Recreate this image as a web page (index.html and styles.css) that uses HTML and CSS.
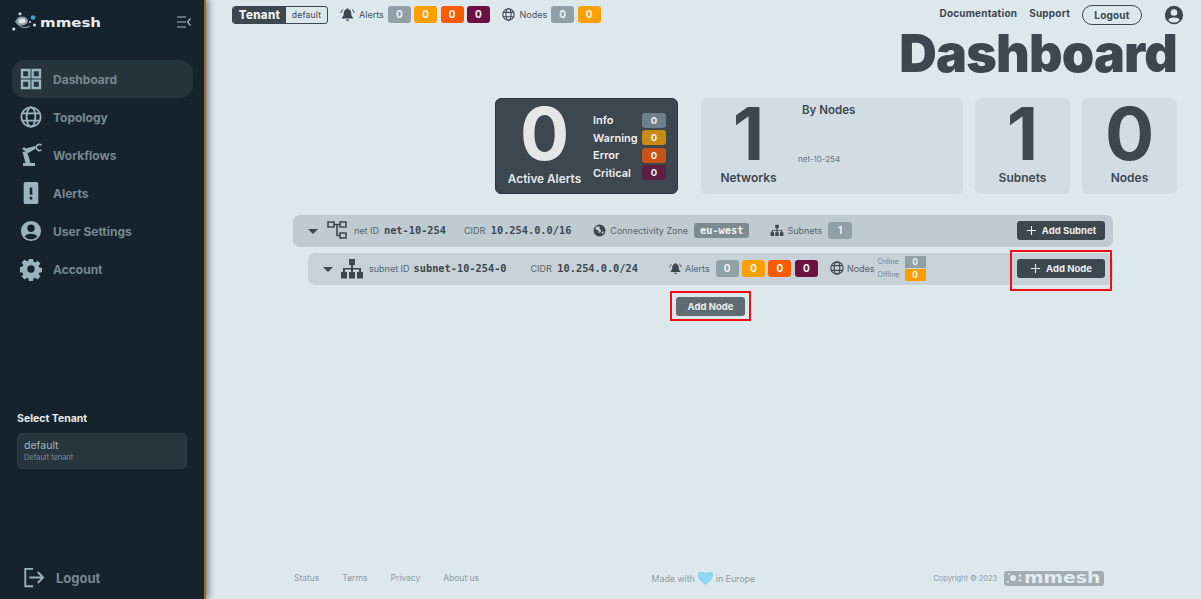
FILE: index.html
```html
<!DOCTYPE html>
<html>

<head>
    <title>Dashboard</title>
    <meta charset="utf-8" />
    <link rel="stylesheet" href="styles.css">
</head>

<body>
    <svg class="defs" width="0" height="0">
        <defs>
            <symbol id="globe" viewBox="0 0 24 24">
                <g fill="none" stroke="currentColor" stroke-width="2">
                    <circle cx="12" cy="12" r="10.500" />
                    <ellipse cx="12" cy="12" rx="4.800" ry="10.500" />
                    <path d="M2.500 8h19M2.500 16h19" />
                </g>
            </symbol>
            <symbol id="bell" viewBox="0 0 24 24">
                <path fill="currentColor" d="M12 2a1.600 1.600 0 0 1 1.600 1.600c3 .8 4.400 3.200 4.400 6.400 0 3.500 1 5.500 3 7v1.500H3V17c2-1.500 3-3.500 3-7 0-3.200 1.400-5.600 4.400-6.400A1.600 1.600 0 0 1 12 2zM9.600 20h4.800a2.400 2.400 0 0 1-4.800 0z" />
                <path fill="none" stroke="currentColor" stroke-width="1.600" d="M1.500 9.500C1.800 7 3 5 5 3.500M22.500 9.500C22.200 7 21 5 19 3.500" />
            </symbol>
            <symbol id="sitemap" viewBox="0 0 24 20">
                <path fill="currentColor" d="M9 0h6v6h-2v3h8v4h-2v-2.500h-6V13h-2v-2.500H5V13H3V9h8V6H9zM1 13h6v6.500H1zM9 13h6v6.500H9zM17 13h6v6.500h-6z" />
            </symbol>
            <symbol id="plus" viewBox="0 0 12 12">
                <path fill="none" stroke="currentColor" stroke-width="1.200" d="M6 1v10M1 6h10" />
            </symbol>
            <symbol id="user" viewBox="0 0 24 24">
                <path fill="currentColor" fill-rule="evenodd" d="M12 1a11 11 0 1 0 0 22 11 11 0 0 0 0-22zm0 4a4 4 0 1 1 0 8 4 4 0 0 1 0-8zm0 16c-2.800 0-5.300-1.200-6.900-3.100C6.200 16 9 15 12 15s5.800 1 6.900 2.900C17.300 19.800 14.800 21 12 21z" />
            </symbol>
        </defs>
    </svg>

    <aside class="sidebar">
        <div class="brand">
            <svg class="brand-mark" viewBox="0 0 28 20">
                <ellipse cx="10" cy="9" rx="6" ry="4.500" fill="#8d9aa1" />
                <ellipse cx="10" cy="9" rx="3.500" ry="2.500" fill="#dfe6e9" />
                <circle cx="21" cy="5.500" r="2.300" fill="#35a7d0" />
                <circle cx="8" cy="1.800" r="1.600" fill="#c4cfd4" />
                <circle cx="1.800" cy="17" r="1.500" fill="#e4eaed" />
                <circle cx="22.500" cy="13" r="1.500" fill="#dfe6e9" />
                <circle cx="18" cy="10" r="1" fill="#dfe6e9" />
                <path d="M3 9q7 10 15 5" fill="none" stroke="#9fb0b8" stroke-width="1" />
            </svg>
            <span class="brand-name">mmesh</span>
            <svg class="collapse" viewBox="0 0 14 12">
                <path fill="none" stroke="#a9bdc4" stroke-width="1.200" d="M0 1h9M0 6h9M0 11h9M13.500 2.500 10.500 6l3 3.500" />
            </svg>
        </div>

        <nav class="menu">
            <a class="menu-item active">
                <svg class="menu-icon" viewBox="0 0 24 24">
                    <path fill="none" stroke="currentColor" stroke-width="2.600" d="M2.200 2.200h8v8h-8zM13.800 2.200h8v8h-8zM2.200 13.800h8v8h-8zM13.800 13.800h8v8h-8z" />
                </svg>
                Dashboard
            </a>
            <a class="menu-item">
                <svg class="menu-icon"><use href="#globe" /></svg>
                Topology
            </a>
            <a class="menu-item">
                <svg class="menu-icon" viewBox="0 0 22 24">
                    <path fill="currentColor" d="M3 20h12v3H3zM2.500 9 7 8l3.500 12h-5zM2 6l2-2 2 1.500L15 3l.8 2.500L8.500 10z" />
                    <path fill="none" stroke="currentColor" stroke-width="1.700" d="M21.500 2Q17.500 0 16 4.500q2 4.500 5.500 2.500" />
                </svg>
                Workflows
            </a>
            <a class="menu-item">
                <svg class="menu-icon" viewBox="0 0 24 24">
                    <path fill="currentColor" fill-rule="evenodd" d="M6 0h12a2 2 0 0 1 2 2v20a2 2 0 0 1-2 2H6a2 2 0 0 1-2-2V2a2 2 0 0 1 2-2zm4.600 6v8h2.800V6zm0 10v3h2.800v-3z" />
                </svg>
                Alerts
            </a>
            <a class="menu-item">
                <svg class="menu-icon"><use href="#user" /></svg>
                User Settings
            </a>
            <a class="menu-item">
                <svg class="menu-icon" viewBox="0 0 24 24">
                    <path fill="currentColor" fill-rule="evenodd" d="M9.800 1h4.400l.6 3.100 1.700.7 2.600-1.800 3.100 3.100-1.800 2.600.7 1.700 3 .6v4.400l-3 .6-.7 1.700 1.800 2.600-3.100 3.100-2.600-1.800-1.700.7-.6 3H9.800l-.6-3-1.700-.7-2.600 1.800-3.100-3.100 1.800-2.600-.7-1.700-3-.6V9.800l3-.6.7-1.700L1.800 4.900l3.100-3.100 2.600 1.800 1.700-.7zM12 8a4 4 0 1 0 0 8 4 4 0 0 0 0-8z" />
                </svg>
                Account
            </a>
        </nav>

        <div class="tenant-select">
            <h4>Select Tenant</h4>
            <div class="tenant-box">
                <div class="tenant-name">default</div>
                <div class="tenant-desc">Default tenant</div>
            </div>
        </div>

        <a class="side-logout">
            <svg viewBox="0 0 24 22">
                <path fill="none" stroke="currentColor" stroke-width="2" d="M11 1.500H2.500v19H11M7 11h15M16 5l6 6-6 6" />
            </svg>
            Logout
        </a>
    </aside>

    <main class="main">
        <header class="topbar">
            <div class="tenant-tag"><b>Tenant</b><span>default</span></div>
            <div class="stat">
                <svg class="ic ic-bell"><use href="#bell" /></svg>
                <span class="stat-label">Alerts</span>
                <span class="counts">
                    <i class="count grey">0</i><i class="count orange">0</i><i class="count red">0</i><i class="count plum">0</i>
                </span>
            </div>
            <div class="stat">
                <svg class="ic"><use href="#globe" /></svg>
                <span class="stat-label">Nodes</span>
                <span class="counts">
                    <i class="count grey">0</i><i class="count orange">0</i>
                </span>
            </div>
            <div class="top-links">
                <a>Documentation</a>
                <a>Support</a>
                <a class="logout-btn">Logout</a>
                <svg class="top-user"><use href="#user" /></svg>
            </div>
        </header>

        <h1 class="title">Dashboard</h1>

        <section class="cards">
            <div class="card alerts-card">
                <div class="alerts-left">
                    <div class="big-num">0</div>
                    <div class="alerts-caption">Active Alerts</div>
                </div>
                <div class="alerts-list">
                    <div class="alert-row">Info<i class="pill p-info">0</i></div>
                    <div class="alert-row">Warning<i class="pill p-warn">0</i></div>
                    <div class="alert-row">Error<i class="pill p-err">0</i></div>
                    <div class="alert-row">Critical<i class="pill p-crit">0</i></div>
                </div>
            </div>
            <div class="card networks-card">
                <div class="card-stat">
                    <div class="big-num">1</div>
                    <div class="card-caption">Networks</div>
                </div>
                <div class="by-nodes">
                    <div class="by-title">By Nodes</div>
                    <div class="by-net">net-10-254</div>
                </div>
            </div>
            <div class="card small-card">
                <div class="big-num">1</div>
                <div class="card-caption">Subnets</div>
            </div>
            <div class="card small-card">
                <div class="big-num">0</div>
                <div class="card-caption">Nodes</div>
            </div>
        </section>

        <section class="tree">
            <div class="row net-row">
                <span class="caret"></span>
                <svg class="net-ic" viewBox="0 0 20 18">
                    <path fill="none" stroke="currentColor" stroke-width="1.600" d="M1 1h6v5H1zM13 1h6v5h-6zM13 12h6v5h-6zM7 3.500h6M10 3.500V14.500h3" />
                </svg>
                <span class="lbl lbl-id">net ID</span><span class="mono mono-id">net-10-254</span>
                <span class="lbl lbl-cidr">CIDR</span><span class="mono">10.254.0.0/16</span>
                <svg class="earth" viewBox="0 0 24 24">
                    <path fill="currentColor" fill-rule="evenodd" d="M12 1a11 11 0 1 0 0 22 11 11 0 0 0 0-22zM5 5l5-1 3 2-1 3 3 2-1 4-3 2-1-5-5-2zm11 10 3-2 1 2-3 4z" />
                </svg>
                <span class="lbl">Connectivity Zone</span><span class="zone">eu-west</span>
                <svg class="ic ic-sub"><use href="#sitemap" /></svg>
                <span class="lbl">Subnets</span><i class="count-s">1</i>
                <button class="btn btn-subnet"><svg class="plus"><use href="#plus" /></svg>Add Subnet</button>
            </div>

            <div class="row subnet-row">
                <span class="caret"></span>
                <svg class="sub-ic"><use href="#sitemap" /></svg>
                <span class="lbl lbl-id">subnet ID</span><span class="mono mono-sub">subnet-10-254-0</span>
                <span class="lbl lbl-cidr">CIDR</span><span class="mono">10.254.0.0/24</span>
                <svg class="ic ic-alert"><use href="#bell" /></svg>
                <span class="lbl">Alerts</span>
                <span class="counts">
                    <i class="count grey">0</i><i class="count orange">0</i><i class="count red">0</i><i class="count plum">0</i>
                </span>
                <svg class="ic ic-nodes"><use href="#globe" /></svg>
                <span class="lbl">Nodes</span>
                <div class="online">
                    <div class="online-row">Online<i class="tiny grey">0</i></div>
                    <div class="online-row">Offline<i class="tiny orange">0</i></div>
                </div>
                <div class="mark mark-row">
                    <button class="btn btn-node"><svg class="plus"><use href="#plus" /></svg>Add Node</button>
                </div>
            </div>

            <div class="mark mark-center">
                <button class="btn btn-light">Add Node</button>
            </div>
        </section>

        <footer class="footer">
            <div class="foot-links"><a>Status</a><a>Terms</a><a>Privacy</a><a>About us</a></div>
            <div class="made">Made with
                <svg viewBox="0 0 16 14"><path fill="#8fd6f2" d="M8 14C3 10 0 7.500 0 4a4 4 0 0 1 8-1.500A4 4 0 0 1 16 4c0 3.500-3 6-8 10z" /></svg>
                in Europe
            </div>
            <div class="copy">Copyright © 2023
                <span class="foot-logo">
                    <svg viewBox="0 0 18 12">
                        <circle cx="7" cy="6" r="3" fill="#dde8ed" />
                        <circle cx="14" cy="3.500" r="1.300" fill="#dde8ed" />
                        <circle cx="14" cy="8.500" r="1.300" fill="#dde8ed" />
                        <circle cx="3" cy="2" r="1" fill="#dde8ed" />
                        <circle cx="2" cy="10" r="1" fill="#dde8ed" />
                    </svg><span class="foot-name">mmesh</span>
                </span>
            </div>
        </footer>
    </main>
</body>

</html>
```

FILE: styles.css
```css
* {
    box-sizing: border-box;
}

html,
body {
    height: 100%;
    margin: 0;
}

body {
    display: flex;
    height: 599px;
    overflow: hidden;
    background: #dde8ed;
    color: #3d4750;
    font-family: Inter, "Liberation Sans", sans-serif;
}

.defs {
    position: absolute;
}

i {
    font-style: normal;
}

/* sidebar */
.sidebar {
    display: flex;
    flex-direction: column;
    flex: 0 0 206px;
    width: 206px;
    height: 599px;
    padding: 12px 0 0 12px;
    background: #17232c;
    border-right: 2px solid #a4651f;
    box-shadow: 3px 0 6px rgba(40, 50, 55, 0.55);
    z-index: 2;
}

.brand {
    display: flex;
    align-items: center;
    height: 20px;
}

.brand-mark {
    width: 28px;
    height: 20px;
    flex: none;
}

.brand-name {
    display: inline-block;
    width: 60px;
    color: #e6edf0;
    font-family: "DejaVu Sans", sans-serif;
    font-size: 12.500px;
    font-weight: 700;
    transform: scaleX(1.2);
    transform-origin: left center;
}

.collapse {
    width: 14px;
    height: 12px;
    margin-left: 77px;
}

.menu {
    display: flex;
    flex-direction: column;
    width: 181px;
    margin-top: 28px;
}

.menu-item {
    display: flex;
    align-items: center;
    height: 38px;
    padding-left: 8px;
    border-radius: 13px;
    color: #75898f;
    font-size: 12px;
    font-weight: 700;
}

.menu-item.active {
    background: #26343c;
}

.menu-icon {
    width: 22px;
    height: 24px;
    margin-right: 11px;
    color: #9ab4bd;
}

.tenant-select {
    margin: 124px 0 0 5px;
}

.tenant-select h4 {
    margin: 0 0 8px;
    color: #e4ebee;
    font-size: 10.500px;
    font-weight: 700;
}

.tenant-box {
    width: 170px;
    height: 36px;
    padding: 5px 6px;
    background: #27353d;
    border: 1px solid #2f3e47;
    border-radius: 5px;
}

.tenant-name {
    color: #a5b6bc;
    font-size: 10.500px;
    line-height: 13px;
}

.tenant-desc {
    color: #7b8d94;
    font-size: 7.400px;
    line-height: 11px;
}

.side-logout {
    display: flex;
    align-items: center;
    gap: 11px;
    margin: 98px 0 0 11px;
    color: #75898f;
    font-size: 13px;
    font-weight: 700;
}

.side-logout svg {
    width: 22px;
    height: 21px;
    color: #9ab4bd;
}

/* main column */
.main {
    flex: 1;
    display: flex;
    flex-direction: column;
    min-width: 0;
    padding: 5px 24px 0 26px;
}

.topbar {
    display: flex;
    align-items: center;
    height: 19px;
}

.tenant-tag {
    display: flex;
    width: 96px;
    height: 18px;
    border: 1px solid #3d4750;
    border-radius: 3px;
    overflow: hidden;
    font-size: 8.500px;
    line-height: 16px;
}

.tenant-tag b {
    width: 53px;
    background: #3d4750;
    color: #eef3f5;
    font-size: 11.500px;
    font-weight: 800;
    text-align: center;
    letter-spacing: 0.3px;
}

.tenant-tag span {
    flex: 1;
    text-align: center;
    letter-spacing: 0.2px;
}

.stat {
    display: flex;
    align-items: center;
    margin-left: 12px;
}

.stat + .stat {
    margin-left: 12.500px;
}

.ic {
    width: 13px;
    height: 13px;
    flex: none;
}

.ic-bell {
    width: 15px;
    height: 15px;
}

.stat-label {
    margin: 0 4px;
    color: #48535b;
    font-size: 9px;
}

.counts {
    display: flex;
    gap: 3.400px;
}

.count {
    width: 23px;
    height: 17px;
    border-radius: 3px;
    color: #eef3f5;
    font-size: 10px;
    font-weight: 700;
    line-height: 16px;
    text-align: center;
}

.grey {
    background: #919fa7;
}

.orange {
    background: #ffa000;
}

.red {
    background: #fb5b00;
}

.plum {
    background: #6b1242;
}

.top-links {
    display: flex;
    align-items: center;
    margin: 0 -7px 0 auto;
    font-size: 10px;
    font-weight: 700;
    letter-spacing: 0.2px;
}

.top-links a {
    margin-right: 12px;
    padding-bottom: 4px;
}

.top-links .logout-btn {
    width: 60px;
    height: 20px;
    margin: 0;
    padding: 0;
    border: 1px solid #3d4750;
    border-radius: 10px;
    line-height: 18px;
    text-align: center;
}

.top-user {
    width: 20px;
    height: 20px;
    margin-left: 22px;
}

.title {
    margin: 0 0 5px;
    font-size: 52px;
    font-weight: 900;
    line-height: 60px;
    text-align: right;
    letter-spacing: -0.8px;
}

/* stat cards */
.cards {
    display: flex;
    justify-content: flex-end;
    gap: 12px;
    margin-top: 9px;
}

.card {
    height: 96px;
    border-radius: 6px;
    background: #d2dde3;
}

.big-num {
    font-size: 73px;
    font-weight: 700;
    line-height: 70px;
    text-align: center;
}

.card-caption {
    font-size: 12px;
    font-weight: 600;
    line-height: 15px;
    text-align: center;
}

.small-card {
    width: 95px;
}

.small-card .big-num {
    margin-top: 1px;
}

.small-card .card-caption {
    margin-top: 1px;
}

.alerts-card {
    display: flex;
    width: 183px;
    margin-right: 11px;
    padding: 0 11px 0 0;
    background: #3d4750;
    border: 1px solid #2d353c;
    color: #e4e6e8;
}

.alerts-left {
    width: 97px;
}

.alerts-caption {
    margin-top: 3px;
    font-size: 11.800px;
    font-weight: 600;
    line-height: 15px;
    text-align: center;
}

.alerts-list {
    flex: 1;
    padding-top: 12.500px;
}

.alert-row {
    display: flex;
    justify-content: space-between;
    align-items: center;
    height: 17.500px;
    color: #eef0f2;
    font-size: 11px;
    font-weight: 600;
}

.pill {
    width: 24px;
    height: 15px;
    border-radius: 3px;
    font-size: 9.500px;
    font-weight: 700;
    line-height: 15px;
    text-align: center;
}

.p-info {
    background: #6f7f89;
}

.p-warn {
    background: #c98a14;
}

.p-err {
    background: #c95415;
}

.p-crit {
    background: #5e1e44;
}

.networks-card {
    display: flex;
    width: 262px;
}

.card-stat {
    width: 94px;
    padding-left: 1px;
}

.card-stat .big-num {
    margin-top: 1px;
}

.card-stat .card-caption {
    margin-top: 1px;
}

.by-nodes {
    padding: 5px 0 0 7px;
}

.by-title {
    font-size: 11.500px;
    font-weight: 600;
    line-height: 14px;
}

.by-net {
    margin: 37px 0 0 -4px;
    color: #66737b;
    font-size: 8px;
    line-height: 10px;
}

/* topology rows */
.tree {
    display: flex;
    flex-direction: column;
    margin: 21px 0 0 61px;
    width: 820px;
}

.row {
    display: flex;
    align-items: center;
    height: 32px;
    padding-bottom: 2px;
    border-radius: 7px;
}

.net-row {
    padding-left: 15px;
    padding-right: 8px;
    background: #bfcbd0;
}

.subnet-row {
    margin: 6px 0 0 15px;
    padding-left: 15px;
    padding-right: 8px;
    background: #c6d2d7;
}

.caret {
    width: 0;
    height: 0;
    margin-top: 2px;
    border-left: 5px solid transparent;
    border-right: 5px solid transparent;
    border-top: 5px solid #3d4750;
    margin-right: 9px;
}

.subnet-row .caret {
    margin-right: 7px;
}

.net-ic {
    width: 20px;
    height: 18px;
    margin-right: 7px;
    margin-top: -1px;
}

.sub-ic {
    width: 24px;
    height: 20px;
    margin-right: 5px;
    margin-top: 2px;
}

.lbl {
    color: #5a666e;
    font-size: 9px;
    white-space: nowrap;
}

.lbl-cidr {
    margin-right: 5.500px;
}

.mono {
    font-family: "DejaVu Sans Mono", monospace;
    font-size: 10.300px;
    font-weight: 700;
    white-space: nowrap;
}

.mono-id {
    margin: 0 18px 0 5px;
}

.mono-sub {
    margin: 0 24px 0 4px;
}

.earth {
    width: 13px;
    height: 13px;
    margin: 0 4px 0 22px;
}

.zone {
    margin-left: 6px;
    padding: 0 6px;
    height: 15px;
    border-radius: 3px;
    background: #7d8a91;
    color: #eef3f5;
    font-family: "DejaVu Sans Mono", monospace;
    font-size: 10.300px;
    font-weight: 700;
    line-height: 15px;
}

.ic-sub {
    width: 14px;
    margin: 0 3px 0 21px;
}

.count-s {
    width: 24px;
    height: 17px;
    margin-left: 6px;
    border-radius: 3px;
    background: #919fa7;
    color: #eef3f5;
    font-size: 10px;
    font-weight: 700;
    line-height: 16px;
    text-align: center;
}

.btn {
    display: flex;
    align-items: center;
    justify-content: center;
    height: 19px;
    padding: 0;
    border: 0;
    border-radius: 3px;
    background: #3d4750;
    color: #e9eef1;
    font-family: Inter, "Liberation Sans", sans-serif;
    font-size: 9.500px;
    font-weight: 700;
}

.plus {
    width: 11px;
    height: 11px;
    margin-right: 5px;
}

.btn-subnet {
    width: 88px;
    margin-left: auto;
}

.btn-node {
    width: 88px;
}

.btn-light {
    width: 69px;
    background: #606b72;
}

.ic-alert {
    margin: 0 3px 0 31px;
}

.subnet-row .counts {
    margin-left: 6px;
}

.ic-nodes {
    width: 14px;
    height: 14px;
    margin: 0 3px 0 12px;
}

.online {
    width: 48px;
    margin-left: 3px;
}

.online-row {
    display: flex;
    justify-content: space-between;
    align-items: center;
    height: 13px;
    color: #76838b;
    font-size: 7px;
}

.tiny {
    width: 21px;
    height: 12px;
    color: #eef3f5;
    font-size: 8.500px;
    font-weight: 700;
    line-height: 12px;
    text-align: center;
}

.mark {
    border: 2px solid #f10d16;
}

.mark-row {
    margin: 4px -7px 0 auto;
    padding: 7px 5px 11px;
    height: 41px;
}

.mark-center {
    align-self: center;
    margin: 6px 0 0 15px;
    padding: 4px;
    height: 30px;
}

/* footer */
.footer {
    display: flex;
    align-items: center;
    justify-content: space-between;
    width: 810px;
    height: 20px;
    margin: auto 0 11px 62px;
    color: #8f9ca3;
    font-size: 8.500px;
}

.foot-links {
    display: flex;
    gap: 23px;
}

.made {
    display: flex;
    align-items: center;
    gap: 3px;
    margin-right: 6px;
    font-size: 8.800px;
}

.made svg {
    width: 15px;
    height: 13px;
}

.copy {
    display: flex;
    align-items: center;
    gap: 7px;
    font-size: 7.400px;
}

.foot-logo {
    display: flex;
    align-items: center;
    width: 100px;
    height: 15px;
    padding-left: 2px;
    border-radius: 3px;
    background: #a2adb3;
    color: #e4ecef;
    font-family: "DejaVu Sans", sans-serif;
    font-size: 15px;
    font-weight: 700;
    overflow: hidden;
}

.foot-logo svg {
    width: 18px;
    height: 12px;
    flex: none;
}

.foot-name {
    display: inline-block;
    transform: scaleX(1.250);
    transform-origin: left center;
}
```
